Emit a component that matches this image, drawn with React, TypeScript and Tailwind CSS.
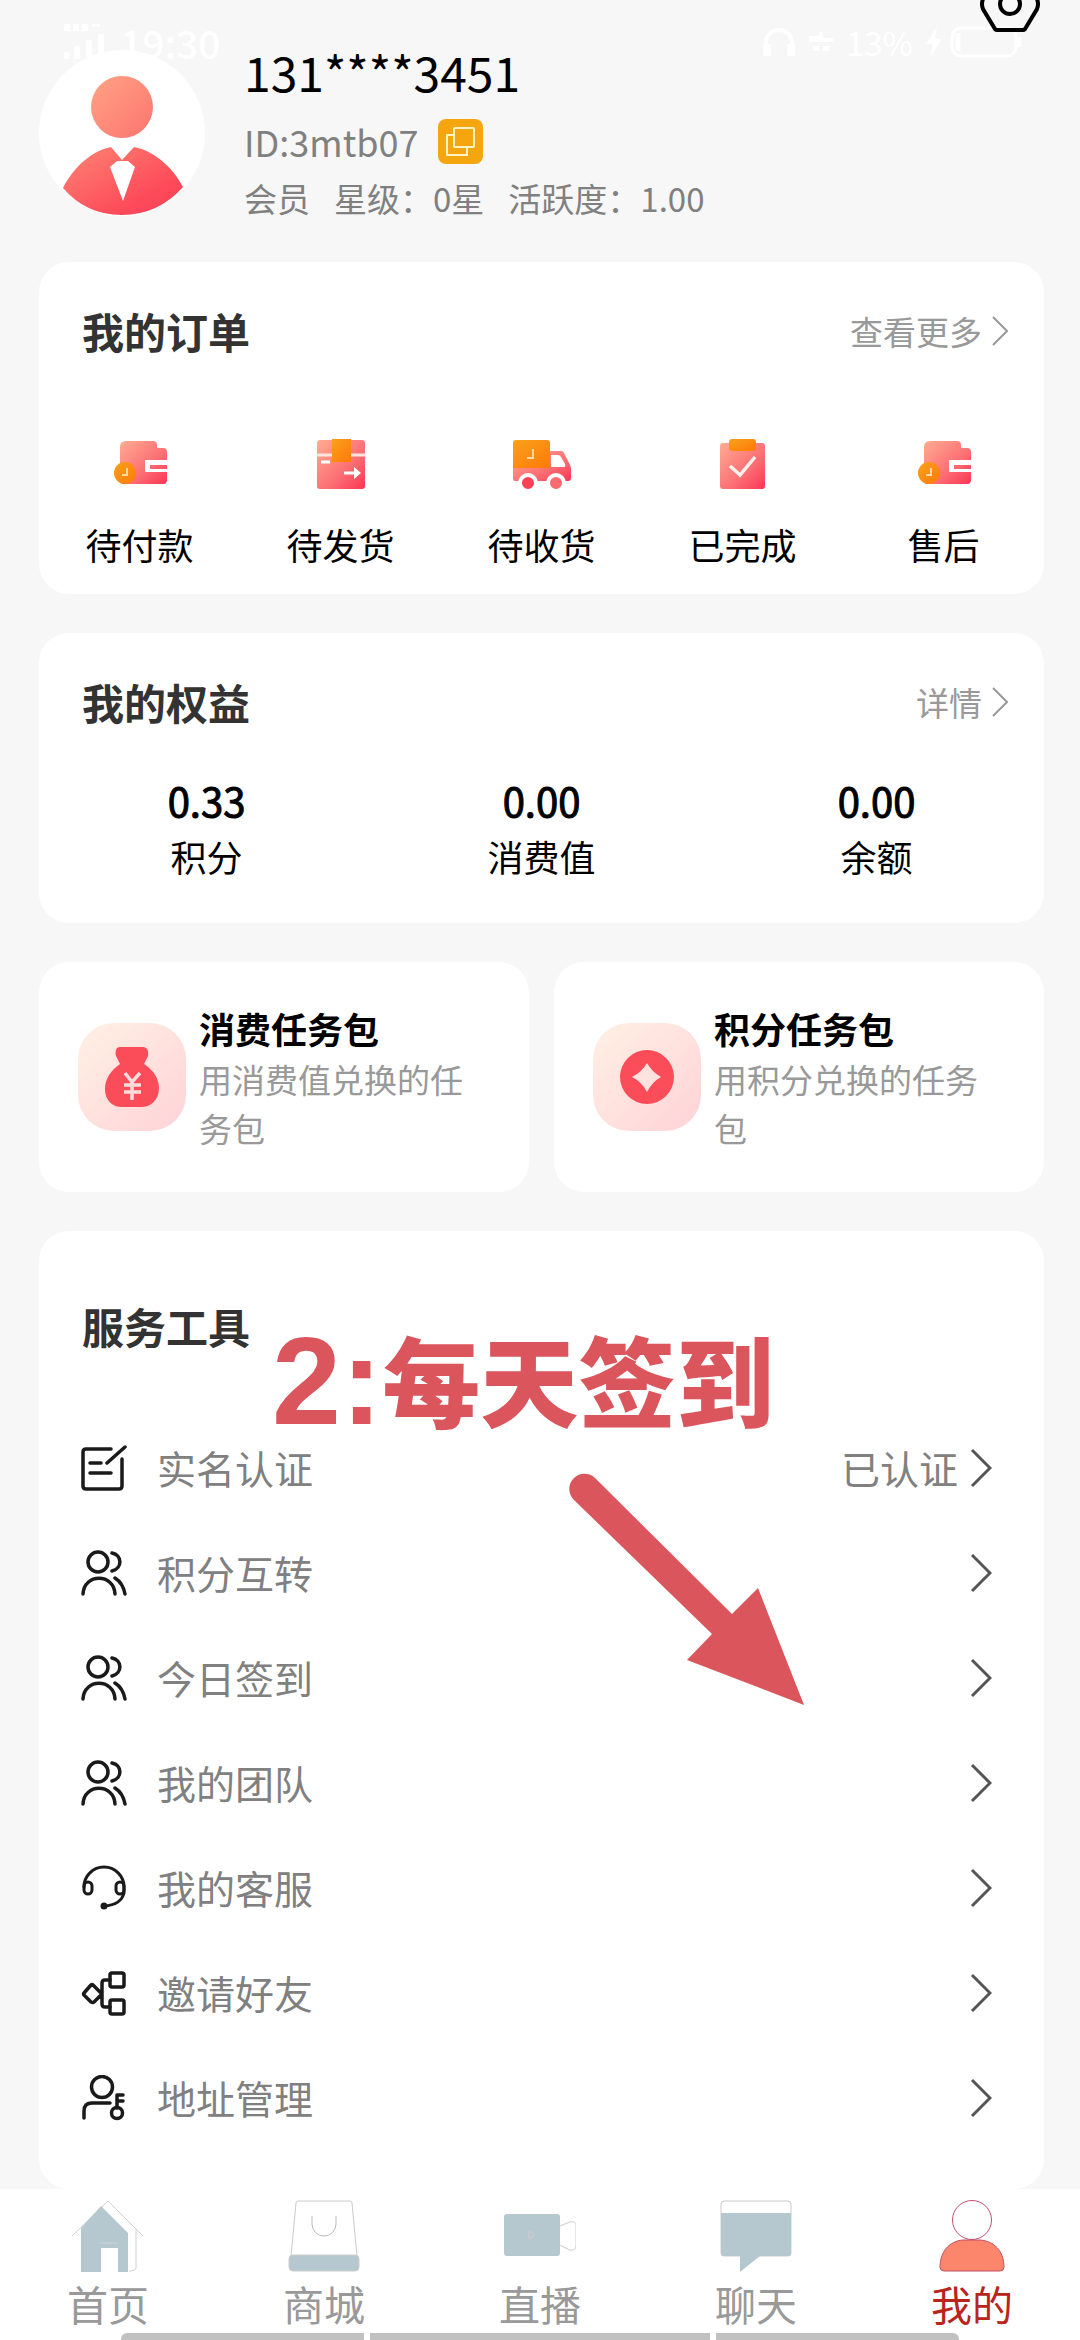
import React from 'react'

const orders = [
	{ label: '待付款', icon: <WalletIcon /> },
	{ label: '待发货', icon: <PackageIcon /> },
	{ label: '待收货', icon: <TruckIcon /> },
	{ label: '已完成', icon: <ClipboardIcon /> },
	{ label: '售后', icon: <WalletIcon /> },
]

const assets = [
	{ label: '积分', value: '0.33' },
	{ label: '消费值', value: '0.00' },
	{ label: '余额', value: '0.00' },
]

const tasks = [
	{ title: '消费任务包', desc: '用消费值兑换的任务包', icon: <MoneyBagIcon /> },
	{ title: '积分任务包', desc: '用积分兑换的任务包', icon: <CoinIcon /> },
]

const tools = [
	{ label: '实名认证', icon: <VerifyIcon />, extra: '已认证' },
	{ label: '积分互转', icon: <UsersIcon /> },
	{ label: '今日签到', icon: <UsersIcon /> },
	{ label: '我的团队', icon: <UsersIcon /> },
	{ label: '我的客服', icon: <HeadsetIcon /> },
	{ label: '邀请好友', icon: <ShareIcon /> },
	{ label: '地址管理', icon: <AddressIcon /> },
]

const tabs = [
	{ label: '首页', icon: <HomeTabIcon /> },
	{ label: '商城', icon: <ShopTabIcon /> },
	{ label: '直播', icon: <LiveTabIcon /> },
	{ label: '聊天', icon: <ChatTabIcon /> },
	{ label: '我的', icon: <MineTabIcon />, active: true },
]

export default function App() {
	return (
		<div className="relative flex min-h-screen flex-col overflow-hidden bg-[#f7f7f7] font-['Noto_Sans_CJK_SC',sans-serif] text-black">
			<Gradients />
			<StatusBar />
			<main className="flex flex-1 flex-col gap-[39px] pt-[42px] pr-9 pl-[39px]">
				<Profile />

				<section className="rounded-[30px] bg-white pt-[39px] pb-[25px]">
					<SectionHead title="我的订单" more="查看更多" />
					<div className="mt-[76px] grid grid-cols-5">
						{orders.map((item) => (
							<button key={item.label} className="flex flex-col items-center gap-7 text-[36px] leading-[50px]">
								{item.icon}
								{item.label}
							</button>
						))}
					</div>
				</section>

				<section className="rounded-[30px] bg-white py-[39px]">
					<SectionHead title="我的权益" more="详情" />
					<dl className="mt-[40px] grid grid-cols-3 text-center leading-[56px]">
						{assets.map((item) => (
							<div key={item.label} className="flex flex-col-reverse">
								<dt className="text-[36px]">{item.label}</dt>
								<dd className="text-[40px] [-webkit-text-stroke:1px_#000]">{item.value}</dd>
							</div>
						))}
					</dl>
				</section>

				<div className="grid grid-cols-2 gap-[25px]">
					{tasks.map((task) => (
						<button key={task.title} className="flex items-center gap-[13px] rounded-[30px] bg-white py-[39px] pr-9 pl-[39px] text-left">
							<span className="size-[108px] shrink-0 overflow-hidden rounded-[36px] bg-linear-to-br from-[#fff0e4] to-[#ffd3d8]">
								{task.icon}
							</span>
							<span className="flex flex-col">
								<span className="text-[36px] leading-[54px] font-bold">{task.title}</span>
								<span className="text-[33px] leading-[49px] text-[#999]">{task.desc}</span>
							</span>
						</button>
					))}
				</div>

				<section className="relative rounded-[30px] bg-white pt-[65px] pb-[39px]">
					<SectionHead title="服务工具" />
					<ul className="mt-[59px]">
						{tools.map((tool) => (
							<li key={tool.label}>
								<button className="flex h-[105px] w-full items-center pr-[52px] pl-[42px] text-[39px] text-[#808080]">
									{tool.icon}
									<span className="ml-[30px]">{tool.label}</span>
									<span className="ml-auto">{tool.extra}</span>
									<svg className="ml-3 h-10 w-[22px]" viewBox="0 0 22 40" fill="none" stroke="#555" strokeWidth="3">
										<path d="M2 2l18 18L2 38" />
									</svg>
								</button>
							</li>
						))}
					</ul>
					<Callout />
				</section>
			</main>
			<TabBar />
		</div>
	)
}

function StatusBar() {
	return (
		<div className="absolute inset-x-0 top-0 z-10 h-16 text-white">
			<svg className="absolute top-0 right-[40px] h-8 w-[60px]" viewBox="0 0 60 32" fill="none" stroke="#000" strokeWidth="4">
				<path d="M15-24L3-1Q1 4 3 9l12 20q1 1 2 1h26q1 0 2-1L57 9q2-5 0-10L45-24" />
				<circle cx="30" cy="4" r="10" />
			</svg>
			<div className="flex h-full items-start justify-between pt-6 pr-[58px] pl-16">
				<div className="flex items-center gap-4">
					<svg className="h-9 w-10" viewBox="0 0 40 36" fill="currentColor">
						<path d="M0 28h5v7H0zM10 22h6v13h-6zM22 16h6v19h-6zM34 10h6v25h-6zM0 0h6v7H0zM9 0h6v7H9zM18 0h6v7h-6zM28 0h8v3h-8z" />
					</svg>
					<span className="text-[39px] leading-9 font-medium">19:30</span>
				</div>
				<div className="flex items-center gap-[13px]">
					<svg className="h-8 w-[34px]" viewBox="0 0 34 32" fill="none" stroke="currentColor" strokeWidth="4">
						<path d="M4 24v-7a13 13 0 0 1 26 0v7" />
						<path d="M5 18v12M29 18v12" strokeWidth="8" />
					</svg>
					<svg className="h-5 w-6" viewBox="0 0 24 20" fill="currentColor">
						<path d="M0 4h10V0h4v6h10v4H0zM4 14h6v5H4zM14 14h6v5h-6z" />
					</svg>
					<span className="text-[33px] leading-9">13%</span>
					<div className="flex items-center gap-2">
						<svg className="h-8 w-4" viewBox="0 0 16 32" fill="currentColor">
							<path d="M11 1L0 18h7L4 31l12-18H9z" />
						</svg>
						<svg className="h-8 w-[72px]" viewBox="0 0 72 32" fill="none" stroke="currentColor" strokeWidth="3">
							<rect x="2" y="2" width="64" height="28" rx="9" />
							<path d="M8 7v18M69 11v10" strokeWidth="5" />
						</svg>
					</div>
				</div>
			</div>
		</div>
	)
}

function Profile() {
	return (
		<header className="flex items-center gap-[39px]">
			<svg className="size-[166px] rounded-full bg-white" viewBox="0 0 166 166">
				<circle cx="83" cy="57" r="31" fill="url(#skin)" />
				<path d="M24 138C34 118 52 101 72 97l11 13 12-13c21 4 39 21 49 40q-25 28-61 28T24 138z" fill="url(#suit)" />
				<path d="M78 111h11l7 6-12 34-13-34z" fill="#fff" />
			</svg>
			<div>
				<h1 className="text-[48px] leading-[58px]">131****3451</h1>
				<div className="mt-[17px] flex h-12 items-center gap-5 text-[36px] leading-[46px] text-[#808080]">
					<span>ID:3mtb07</span>
					<button aria-label="复制" className="size-[45px] rounded-lg bg-[#f5a60f]">
						<svg viewBox="0 0 45 45" fill="none" stroke="#fff3c4" strokeWidth="2">
							<rect x="16" y="9" width="20" height="19" rx="1" />
							<path d="M16 16H9v20h20v-8" />
						</svg>
					</button>
				</div>
				<p className="mt-2 flex gap-6 text-[33px] leading-[50px] text-[#808080]">
					<span>会员</span>
					<span>星级：0星</span>
					<span>活跃度：1.00</span>
				</p>
			</div>
		</header>
	)
}

function SectionHead({ title, more }: { title: string; more?: string }) {
	return (
		<div className="flex items-center justify-between pr-9 pl-[43px] leading-[60px]">
			<h2 className="text-[42px] font-bold text-[#333]">{title}</h2>
			{more && (
				<a href="#more" className="flex items-center gap-[10px] text-[33px] text-[#999]">
					{more}
					<svg className="h-[30px] w-4" viewBox="0 0 16 30" fill="none" stroke="#999" strokeWidth="2">
						<path d="M1 1l14 14L1 29" />
					</svg>
				</a>
			)}
		</div>
	)
}

function Callout() {
	return (
		<div className="pointer-events-none absolute top-[90px] left-[233px] text-[#da555c]">
			<p className="flex items-start font-black whitespace-nowrap">
				<span className="font-['Liberation_Sans',sans-serif] text-[124px] leading-[120px]">2:</span>
				<span className="text-[98px] leading-[112px]">每天签到</span>
			</p>
			<svg className="mt-8 ml-[297px] h-[232px] w-[236px]" viewBox="0 0 236 232" fill="currentColor">
				<path d="M5 27A15 15 0 0 1 26 5L163 141l26-26 46 117-117-45 25-26z" />
			</svg>
		</div>
	)
}

function TabBar() {
	return (
		<nav className="relative bg-white pt-[11px] pb-[10px]">
			<div className="grid grid-cols-5">
				{tabs.map((tab) => (
					<a
						key={tab.label}
						href="#tab"
						className={`flex flex-col items-center gap-1 text-[41px] leading-[54px] ${tab.active ? 'text-[#b9241c]' : 'text-[#999]'}`}
					>
						{tab.icon}
						{tab.label}
					</a>
				))}
			</div>
			<div className="absolute inset-x-0 bottom-0 flex h-[7px] gap-[6px] px-[121px]">
				<span className="flex-5 rounded-tl-md bg-[#c1c1c1]" />
				<span className="flex-7 bg-[#c1c1c1]" />
				<span className="flex-5 rounded-tr-md bg-[#c1c1c1]" />
			</div>
		</nav>
	)
}

// shared fills for the order icons and the avatar
function Gradients() {
	return (
		<svg className="absolute size-0" aria-hidden="true">
			<defs>
				<linearGradient id="skin" x1="0" y1="0" x2="1" y2="1">
					<stop offset="0" stopColor="#ffa384" />
					<stop offset="1" stopColor="#fd7470" />
				</linearGradient>
				<linearGradient id="suit" x1="0" y1="0" x2="1" y2="1">
					<stop offset="0" stopColor="#fe8674" />
					<stop offset="0.7" stopColor="#fd4b5a" />
					<stop offset="1" stopColor="#fd4056" />
				</linearGradient>
				<linearGradient id="pink" x1="0" y1="0" x2="1" y2="1">
					<stop offset="0" stopColor="#ffac92" />
					<stop offset="0.6" stopColor="#fb6f74" />
					<stop offset="1" stopColor="#fc3454" />
				</linearGradient>
				<linearGradient id="orange" x1="0" y1="0" x2="1" y2="1">
					<stop offset="0" stopColor="#f9a11b" />
					<stop offset="1" stopColor="#ff7a08" />
				</linearGradient>
			</defs>
		</svg>
	)
}

function WalletIcon() {
	return (
		<svg className="size-[54px]" viewBox="0 0 54 54">
			<path d="M13 4h27q4 0 4 4v3h6q4 0 4 4v28q0 4-4 4H10q-3 0-3-3V10q0-6 6-6z" fill="url(#pink)" />
			<path d="M54 23H32v12h22v-3H37v-4h17z" fill="#fff" />
			<circle cx="12" cy="36" r="11" fill="url(#orange)" />
			<path d="M14 31v7H9" fill="none" stroke="#ffd9a8" strokeWidth="2" />
		</svg>
	)
}

function PackageIcon() {
	return (
		<svg className="size-[54px]" viewBox="0 0 54 54">
			<rect x="3" y="3" width="48" height="49" rx="3" fill="url(#pink)" />
			<path d="M3 18h48" stroke="#ffe3dc" strokeWidth="3" />
			<path d="M18 2h19v23H18z" fill="url(#orange)" />
			<path d="M7 25h9M30 36h13" stroke="#fff" strokeWidth="3" />
			<path d="M40 30l7 6-7 6z" fill="#fff" />
		</svg>
	)
}

function TruckIcon() {
	return (
		<svg className="h-[54px] w-[58px]" viewBox="0 0 58 54">
			<path d="M0 28h37V14h11q2 0 3 2l5 10q2 3 2 6v9q0 3-3 3H2q-2 0-2-2z" fill="url(#pink)" />
			<path d="M38 18h7q2 0 3 2l4 7q1 3-1 3H38z" fill="#fff" />
			<path d="M3 3h31q3 0 3 3v25H0V6q0-3 3-3z" fill="url(#orange)" />
			<path d="M20 12v9h-6" fill="none" stroke="#ffd9a8" strokeWidth="2" />
			<circle cx="15" cy="46" r="8" fill="#fc4058" stroke="#fff" strokeWidth="4" />
			<circle cx="43" cy="46" r="8" fill="#fb6a70" stroke="#fff" strokeWidth="4" />
		</svg>
	)
}

function ClipboardIcon() {
	return (
		<svg className="size-[54px]" viewBox="0 0 54 54">
			<rect x="4" y="6" width="45" height="46" rx="3" fill="url(#pink)" />
			<rect x="13" y="2" width="27" height="12" rx="3" fill="url(#orange)" />
			<path d="M14 29l10 9 15-18" fill="none" stroke="#fff0ee" strokeWidth="3.5" />
		</svg>
	)
}

function MoneyBagIcon() {
	return (
		<svg viewBox="0 0 108 108">
			<path
				d="M42 24h23c4 0 6 4 5 9l-4 8c9 6 15 14 15 24 0 12-8 19-18 19H44c-10 0-17-7-17-18 0-10 6-19 15-25l-4-8c-1-5 0-9 4-9z"
				fill="#fb4c59"
			/>
			<path d="M47 50l7 9 8-9M54 59v18M46 62h17M46 69h17" fill="none" stroke="#ffdcdc" strokeWidth="3.5" />
		</svg>
	)
}

function CoinIcon() {
	return (
		<svg viewBox="0 0 108 108">
			<circle cx="54" cy="54" r="27" fill="#fb4c59" />
			<path d="M54 40q5 9 14 14-9 5-14 15-5-10-15-15 10-5 15-14z" fill="#ffe3e1" />
		</svg>
	)
}

function LineIcon({ children, width = 3.5 }: { children: React.ReactNode; width?: number }) {
	return (
		<svg
			className="size-[46px]"
			viewBox="0 0 46 46"
			fill="none"
			stroke="#1a1a1a"
			strokeWidth={width}
			strokeLinecap="round"
			strokeLinejoin="round"
		>
			{children}
		</svg>
	)
}

function VerifyIcon() {
	return (
		<LineIcon>
			<path d="M30 4H5Q2 4 2 7v34q0 3 3 3h33q3 0 3-3V14M26 18L44 2M9 18h11M9 28h21" />
		</LineIcon>
	)
}

function UsersIcon() {
	return (
		<LineIcon>
			<circle cx="17" cy="12" r="10" />
			<path d="M31 3c10 2 11 15 0 18M2 44c1-21 31-21 32 0M34 28q8 5 10 16" />
		</LineIcon>
	)
}

function HeadsetIcon() {
	return (
		<LineIcon width={3}>
			<path d="M3 22a20 20 0 0 1 40 0M43 22v6q-3 12-20 13" />
			<rect x="3" y="17" width="8" height="12" rx="4" />
			<rect x="35" y="17" width="8" height="12" rx="4" />
			<circle cx="23" cy="41" r="2" fill="#1a1a1a" />
		</LineIcon>
	)
}

function ShareIcon() {
	return (
		<LineIcon>
			<rect x="29" y="3" width="14" height="14" rx="2" />
			<rect x="29" y="30" width="14" height="14" rx="2" />
			<path d="M29 10h-5q-3 0-3 3v21q0 3 3 3h5M10 15q1-1 2 0l8 8q1 1 0 2l-7 7q-1 1-3 0l-7-7q-1-1 0-2z" />
		</LineIcon>
	)
}

function AddressIcon() {
	return (
		<LineIcon>
			<circle cx="21" cy="12" r="10.5" />
			<path d="M3 43v-7q0-8 8-8h18M36 33V20h6M36 26h6" />
			<circle cx="36" cy="38" r="5.5" />
		</LineIcon>
	)
}

function HomeTabIcon() {
	return (
		<svg className="size-[72px]" viewBox="0 0 72 72" fill="none" stroke="#d0d0d0">
			<path d="M0 36L36 1l35 35M64 29v39q0 3-7 3" />
			<path d="M29 6l27 27v39H9V28z" fill="#b6c8cf" stroke="none" />
			<path d="M29 48h17v24H29z" fill="#fff" stroke="none" />
			<path d="M28 43h18" />
		</svg>
	)
}

function ShopTabIcon() {
	return (
		<svg className="size-[72px]" viewBox="0 0 72 72" fill="none" stroke="#ccc">
			<path d="M3 56L8 3q0-2 2-2h52q2 0 2 2l5 53" />
			<path d="M24 16v8a12 12 0 0 0 24 0v-8" stroke="#bbb" />
			<rect x="1" y="55" width="70" height="16" rx="4" fill="#b6c8cf" />
		</svg>
	)
}

function LiveTabIcon() {
	return (
		<svg className="size-[72px]" viewBox="0 0 72 72" fill="none" stroke="#ccc">
			<rect x="0" y="14" width="56" height="42" rx="3" fill="#b6c8cf" stroke="none" />
			<path d="M56 26l10-4q6-1 6 3v21q0 5-6 4-5-2-10-5" />
			<path d="M25 31l6 4-6 4z" />
		</svg>
	)
}

function ChatTabIcon() {
	return (
		<svg className="size-[72px]" viewBox="0 0 72 72">
			<rect x="1" y="1" width="70" height="55" rx="3" fill="#fff" stroke="#ccc" />
			<path d="M1 13h70v40q0 3-3 3H40L20 72V56H4q-3 0-3-3z" fill="#b6c8cf" />
		</svg>
	)
}

function MineTabIcon() {
	return (
		<svg className="size-[72px]" viewBox="0 0 72 72" fill="#fff" stroke="#c0516a">
			<circle cx="36" cy="20" r="19.5" />
			<path d="M27 40h17c14 1 24 11 24 27q0 4-4 4H8q-4 0-4-4c0-15 9-26 23-27z" fill="#fc866b" />
		</svg>
	)
}
